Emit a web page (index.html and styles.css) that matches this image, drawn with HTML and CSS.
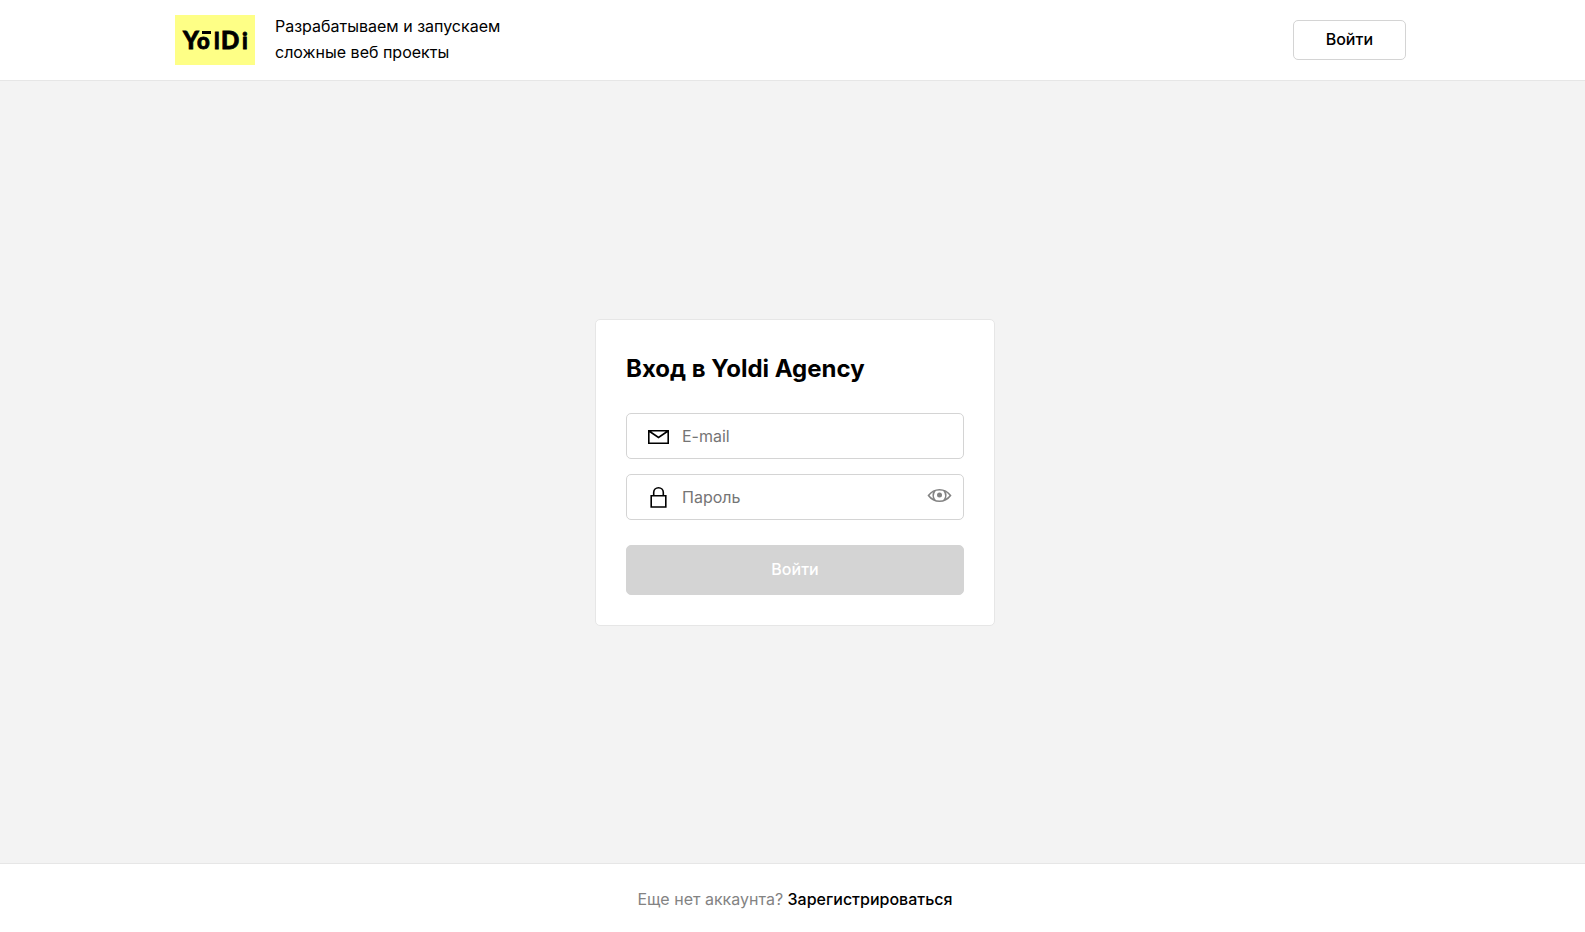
FILE: index.html
```html
<!DOCTYPE html>
<html lang="ru">
<head>
<meta charset="utf-8">
<meta name="viewport" content="width=device-width, initial-scale=1">
<title>Вход в Yoldi Agency</title>
<link rel="stylesheet" href="styles.css">
</head>
<body>
<header class="header">
  <div class="header-inner">
    <a class="logo" href="#" aria-label="Yoldi">
      <svg width="80" height="50" viewBox="0 0 80 50" aria-hidden="true">
        <text class="logo-text" y="34"><tspan x="8">Y</tspan><tspan class="logo-small" x="22">o</tspan><tspan class="logo-small" x="39">l</tspan><tspan x="46">D</tspan><tspan class="logo-small" x="67">i</tspan></text>
        <path d="M27 16h9v3h-9z"/>
      </svg>
    </a>
    <p class="slogan">Разрабатываем и запускаем<br>сложные веб проекты</p>
    <button class="button header-button" type="button">Войти</button>
  </div>
</header>
<main class="main">
  <form class="card">
    <h1 class="title">Вход в Yoldi Agency</h1>
    <div class="fields">
      <label class="field">
        <svg class="icon" viewBox="0 0 25 25" aria-hidden="true">
          <path d="M2.800 7.800h19.400v12.400H2.800zM3 8l9.500 6.500L22 8"/>
        </svg>
        <input class="input" type="email" placeholder="E-mail" aria-label="E-mail">
      </label>
      <div class="field">
        <svg class="icon" viewBox="0 0 25 25" aria-hidden="true">
          <path d="M5.200 11.800h14.600v11.200H5.200zM7.700 11.500V8.500a4.800 4.800 0 0 1 9.600 0v3"/>
        </svg>
        <input class="input" type="password" placeholder="Пароль" aria-label="Пароль">
        <button class="eye" type="button" aria-label="Показать пароль">
          <svg width="25" height="25" viewBox="0 0 25 25" aria-hidden="true">
            <path d="M1.500 11.500C4.500 7.500 8.500 5.700 12.500 5.700S20.500 7.500 23.500 11.500C20.500 15.500 16.500 17.300 12.500 17.300S4.500 15.500 1.500 11.500z"/>
            <path d="M8 6.500C5.800 9.500 5.800 13.500 8 16.500M17 6.500C19.200 9.500 19.200 13.500 17 16.500"/>
            <circle cx="12.500" cy="11" r="2.500"/>
          </svg>
        </button>
      </div>
    </div>
    <button class="button submit" type="submit" disabled>Войти</button>
  </form>
</main>
<footer class="footer">
  <p class="footer-text">Еще нет аккаунта? <a class="link" href="#">Зарегистрироваться</a></p>
</footer>
</body>
</html>
```
FILE: styles.css
```css
* {
  box-sizing: border-box;
}

body {
  display: flex;
  flex-direction: column;
  min-height: 100vh;
  margin: 0;
  background: #f3f3f3;
  color: #000;
  font: 400 16px/26px Inter, "Noto Sans", sans-serif;
}

.header {
  background: #fff;
  border-bottom: 1px solid #e6e6e6;
}

.header-inner {
  display: flex;
  align-items: center;
  gap: 20px;
  max-width: 1235px;
  height: 80px;
  margin: 0 auto;
  padding-right: 4px;
}

.logo {
  display: flex;
  background: #feff86;
}

.logo-text {
  fill: #000;
  stroke: #000;
  stroke-width: 0.8;
  font: 900 24px Lato, sans-serif;
}

.logo-small {
  font-size: 22px;
}

.slogan {
  flex: 1;
  margin: 0;
  padding-bottom: 2px;
}

.button {
  padding: 0 32px 2px;
  border: 1px solid #d4d4d4;
  border-radius: 5px;
  background: #fff;
  color: #000;
  font: 500 16px/26px Inter, "Noto Sans", sans-serif;
  cursor: pointer;
}

.header-button {
  height: 40px;
}

.main {
  display: flex;
  flex: 1;
  align-items: center;
  justify-content: center;
  padding-left: 5px;
}

.card {
  display: flex;
  flex-direction: column;
  gap: 25px;
  width: 400px;
  padding: 30px;
  border: 1px solid #e6e6e6;
  border-radius: 5px;
  background: #fff;
}

.title {
  margin: 0;
  font-size: 24px;
  line-height: 38px;
  font-weight: 700;
}

.fields {
  display: grid;
  grid-template-columns: minmax(0, 1fr);
  gap: 15px;
}

.field {
  display: flex;
  align-items: center;
  gap: 11px;
  height: 46px;
  padding: 0 11px 0 19px;
  border: 1px solid #d4d4d4;
  border-radius: 5px;
}

.icon {
  flex: none;
  width: 25px;
  height: 25px;
  fill: none;
  stroke: #000;
  stroke-width: 1.6;
}

.input {
  flex: 1;
  min-width: 0;
  padding: 0;
  border: 0;
  outline: 0;
  background: none;
  color: #000;
  font: inherit;
}

.input::placeholder {
  color: #757575;
}

.eye {
  display: flex;
  padding: 0;
  border: 0;
  background: none;
  cursor: pointer;
}

.eye path {
  fill: none;
  stroke: #838383;
  stroke-width: 1.6;
}

.eye circle {
  fill: #838383;
}

.submit {
  height: 50px;
  border-color: #d4d4d4;
  background: #d4d4d4;
  color: #fff;
  cursor: default;
}

.footer {
  padding: 22px 0 20px 5px;
  border-top: 1px solid #e6e6e6;
  background: #fff;
  text-align: center;
}

.footer-text {
  margin: 0;
  color: #838383;
}

.link {
  color: #000;
  font-weight: 500;
  text-decoration: none;
}
```
